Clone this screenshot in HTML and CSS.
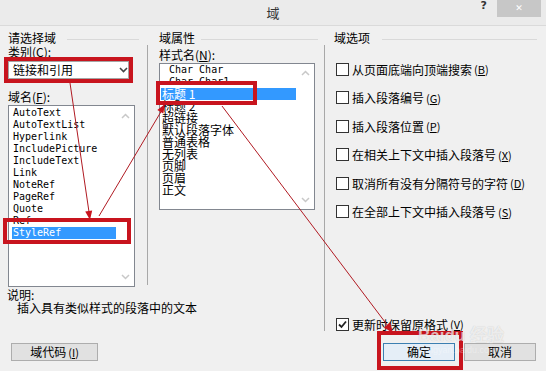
FILE: index.html
```html
<!DOCTYPE html>
<html lang="zh-CN">
<head>
    <meta charset="UTF-8">
    <meta name="viewport" content="width=device-width, initial-scale=1.0">
    <title>域</title>
    <link rel="stylesheet" href="styles.css">
</head>
<body>
  <div class="dialog">
    <div class="titlebar">
      <span></span>
      <span class="title">域</span>
      <div class="title-buttons">
        <span class="help">?</span>
        <span class="close">&#x2715;</span>
      </div>
    </div>

    <div class="panel">
      <div class="col col-left">
        <div class="group-head"><span>请选择域</span><i class="rule"></i></div>
        <div class="label">类别(<u>C</u>):</div>
        <div class="combo">
          <span>链接和引用</span>
          <svg class="chev" width="9" height="6" viewBox="0 0 9 6"><path d="M1 1 L4.5 4.5 L8 1" fill="none" stroke="#444" stroke-width="1.6"/></svg>
        </div>
        <div class="label label-fields">域名(<u>F</u>):</div>
        <div class="listbox list-fields">
          <ul class="items mono">
            <li>AutoText</li>
            <li>AutoTextList</li>
            <li>Hyperlink</li>
            <li>IncludePicture</li>
            <li>IncludeText</li>
            <li>Link</li>
            <li>NoteRef</li>
            <li>PageRef</li>
            <li>Quote</li>
            <li>Ref</li>
            <li class="selected">StyleRef</li>
          </ul>
          <div class="scroll">
            <svg width="9" height="6" viewBox="0 0 9 6"><path d="M1 5 L4.5 1.5 L8 5" fill="none" stroke="#c8c8c8" stroke-width="1.5"/></svg>
            <svg width="9" height="6" viewBox="0 0 9 6"><path d="M1 1 L4.5 4.5 L8 1" fill="none" stroke="#c8c8c8" stroke-width="1.5"/></svg>
          </div>
        </div>
      </div>

      <div class="vsep vsep-left"></div>

      <div class="col col-mid">
        <div class="group-head"><span>域属性</span><i class="rule"></i></div>
        <div class="label label-styles">样式名(<u>N</u>):</div>
        <div class="listbox list-styles">
          <ul class="items items-cjk">
            <li class="mono indent">Char Char</li>
            <li class="mono indent">Char Char1</li>
            <li class="selected">标题 1</li>
            <li>标题 2</li>
            <li>超链接</li>
            <li>默认段落字体</li>
            <li>普通表格</li>
            <li>无列表</li>
            <li>页脚</li>
            <li>页眉</li>
            <li>正文</li>
          </ul>
          <div class="scroll">
            <svg width="9" height="6" viewBox="0 0 9 6"><path d="M1 5 L4.5 1.5 L8 5" fill="none" stroke="#c8c8c8" stroke-width="1.5"/></svg>
            <svg width="9" height="6" viewBox="0 0 9 6"><path d="M1 1 L4.5 4.5 L8 1" fill="none" stroke="#c8c8c8" stroke-width="1.5"/></svg>
          </div>
        </div>
      </div>

      <div class="vsep vsep-right"></div>

      <div class="col col-right">
        <div class="group-head"><span>域选项</span><i class="rule"></i></div>
        <div class="options">
          <label class="opt"><span class="box"></span>从页面底端向顶端搜索<span class="key">(<u>B</u>)</span></label>
          <label class="opt"><span class="box"></span>插入段落编号<span class="key">(<u>G</u>)</span></label>
          <label class="opt"><span class="box"></span>插入段落位置<span class="key">(<u>P</u>)</span></label>
          <label class="opt"><span class="box"></span>在相关上下文中插入段落号<span class="key">(<u>X</u>)</span></label>
          <label class="opt"><span class="box"></span>取消所有没有分隔符号的字符<span class="key">(<u>D</u>)</span></label>
          <label class="opt"><span class="box"></span>在全部上下文中插入段落号<span class="key">(<u>S</u>)</span></label>
        </div>
        <label class="opt opt-keep">
          <span class="box">
            <svg width="11" height="11" viewBox="0 0 11 11"><path d="M2 5.5 L4.5 8 L9 2.5" fill="none" stroke="#222" stroke-width="1.8"/></svg>
          </span>更新时保留原格式<span class="key">(<u>V</u>)</span>
        </label>
      </div>

      <div class="desc">
        <div class="desc-title">说明:</div>
        <div class="desc-text">插入具有类似样式的段落中的文本</div>
      </div>

      <div class="buttons">
        <button class="btn btn-code">域代码<span class="key">(<u>I</u>)</span></button>
        <button class="btn btn-ok">确定</button>
        <button class="btn btn-cancel">取消</button>
      </div>
    </div>

    <!-- red annotation marks drawn over the dialog -->
    <svg class="annot" width="546" height="371" viewBox="0 0 546 371">
      <g fill="none" stroke="#c8141e" stroke-width="4">
        <rect x="6" y="59" width="125" height="22"/>
        <rect x="5" y="220" width="124" height="22"/>
        <rect x="158" y="83" width="97" height="20"/>
        <rect x="379" y="333" width="82" height="35"/>
      </g>
      <g stroke="#b01a22" stroke-width="1" fill="none">
        <line x1="70" y1="83" x2="89" y2="212"/>
        <line x1="99" y1="216" x2="162" y2="110"/>
        <line x1="222" y1="106" x2="388" y2="326"/>
      </g>
      <g fill="#c8141e">
        <polygon points="90,220 92.2,210.6 85.2,211.6"/>
        <polygon points="165,104 163.3,113.5 157.3,109.9"/>
        <polygon points="393,333 390.2,322.6 383.8,327.4"/>
      </g>
    </svg>

    <div class="watermark">
      <div class="wm-logo">Bai<span class="wm-paw">du</span> 经验</div>
      <div class="wm-url">jingyan.baidu.com</div>
    </div>
  </div>
</body>
</html>
```

FILE: styles.css
```css
body {
    margin: 0;
    background-color: #f0f0f0;
    font-family: "Noto Sans CJK SC", sans-serif;
    font-size: 12px;
    color: #000000;
}

.dialog {
    position: relative;
    width: 546px;
    height: 371px;
    background-color: #f0f0f0;
    overflow: hidden;
}

.titlebar {
    height: 25px;
    background-color: #ebebeb;
    border-bottom: 1px solid #dadada;
    display: grid;
    grid-template-columns: 1fr auto 1fr;
    align-items: center;
}

.title {
    font-size: 13px;
    color: #333333;
}

.title-buttons {
    align-self: start;
    display: flex;
    justify-content: flex-end;
}

.help {
    font-family: "DejaVu Sans", sans-serif;
    font-weight: bold;
    font-size: 11px;
    line-height: 11px;
    color: #333333;
    margin-right: 10px;
}

.close {
    width: 44px;
    height: 17px;
    margin-right: 5px;
    background-color: #c7c7c7;
    color: #ffffff;
    font-family: "DejaVu Sans", sans-serif;
    font-size: 9px;
    line-height: 17px;
    text-align: center;
}

.panel {
    display: grid;
    grid-template-columns: 147px 1px 176px 1px 1fr;
    grid-template-rows: 262px 52px auto;
}

.col {
    padding-top: 5px;
    min-width: 0;
}

.col-left {
    grid-column: 1;
    grid-row: 1;
    padding-left: 8px;
}

.col-mid {
    grid-column: 3;
    grid-row: 1;
    padding-left: 11px;
}

.col-right {
    grid-column: 5;
    grid-row: 1 / 3;
    padding-left: 9px;
}

.vsep {
    background-color: #a8a8a8;
    margin-top: 19px;
}

.vsep-left {
    grid-column: 2;
    grid-row: 1;
    height: 240px;
}

.vsep-right {
    grid-column: 4;
    grid-row: 1 / 3;
    height: 286px;
}

.group-head {
    display: flex;
    align-items: center;
    height: 14px;
    line-height: 14px;
    white-space: nowrap;
}

.group-head .rule {
    flex: 1;
    height: 1px;
    margin-top: 2px;
    margin-left: 11px;
    margin-right: 8px;
    background-color: #d9d9d9;
}

.col-mid .group-head .rule {
    margin-left: 6px;
    margin-right: 6px;
}

.col-right .group-head .rule {
    margin-left: 12px;
    margin-right: 9px;
}

.label {
    height: 14px;
    line-height: 14px;
    white-space: nowrap;
}

u {
    text-decoration: underline;
    text-underline-offset: 1px;
}

.combo {
    box-sizing: border-box;
    width: 121px;
    height: 18px;
    margin-top: 2px;
    padding-left: 4px;
    padding-right: 0;
    background-color: #ffffff;
    border: 1px solid #a5a5a5;
    display: flex;
    align-items: center;
    justify-content: space-between;
    line-height: 16px;
}

.label-fields {
    margin-top: 11px;
}

.label-styles {
    margin-top: 3px;
}

.listbox {
    box-sizing: border-box;
    background-color: #ffffff;
    border: 1px solid #828790;
    display: flex;
    justify-content: space-between;
    margin-top: 1px;
}

.list-fields {
    width: 127px;
    height: 182px;
    padding: 1px 0 0 3px;
}

.list-styles {
    width: 156px;
    height: 147px;
    padding: 0 0 0 1px;
}

.items {
    list-style-type: none;
    margin: 0;
    padding: 0;
}

.list-fields .items {
    width: 104px;
}

.list-styles .items {
    width: 135px;
}

.items li {
    height: 12px;
    line-height: 12px;
    padding-left: 1px;
    white-space: nowrap;
}

.mono {
    font-family: "DejaVu Sans Mono", monospace;
    font-size: 10px;
}

.items-cjk li {
    font-size: 12px;
}

.items-cjk li.mono {
    font-size: 10px;
}

.items li.indent {
    padding-left: 8px;
}

.items li.selected {
    background-color: #3399ff;
    color: #ffffff;
}

.scroll {
    width: 17px;
    display: flex;
    flex-direction: column;
    justify-content: space-between;
    align-items: center;
    padding: 6px 0 6px;
}

.options {
    margin-top: 10px;
}

.opt {
    display: flex;
    align-items: center;
    height: 28.5px;
    padding-left: 2px;
    white-space: nowrap;
}

.box {
    box-sizing: border-box;
    width: 13px;
    height: 13px;
    margin-right: 3px;
    border: 1px solid #333333;
    background-color: #ffffff;
    display: flex;
    align-items: center;
    justify-content: center;
}

.key {
    font-size: 11px;
    margin-left: 2px;
}

.opt-keep {
    margin-top: 84px;
}

.desc {
    grid-column: 1 / 4;
    grid-row: 2;
    white-space: nowrap;
}

.desc-title {
    line-height: 13px;
    padding-left: 7px;
}

.desc-text {
    line-height: 13px;
    padding-left: 17px;
}

.buttons {
    grid-column: 1 / -1;
    grid-row: 3;
    display: flex;
    margin-top: 3px;
    padding: 0 10px 0 11px;
    gap: 9px;
}

.btn {
    box-sizing: border-box;
    height: 18px;
    padding: 0;
    font-family: "Noto Sans CJK SC", sans-serif;
    font-size: 12px;
    line-height: 16px;
    color: #000000;
    background-color: #e1e1e1;
    border: 1px solid #adadad;
}

.btn-code {
    width: 87px;
}

.btn-ok {
    width: 72px;
    margin-left: auto;
    border-color: #3c7fb1;
    background-color: #e5eef7;
}

.btn-cancel {
    width: 72px;
}

.annot {
    position: absolute;
    top: 0;
    left: 0;
    pointer-events: none;
}

.watermark {
    position: absolute;
    left: 418px;
    top: 326px;
    color: rgba(255, 255, 255, 0.7);
    text-shadow: 0 0 1px rgba(0, 0, 0, 0.2);
    pointer-events: none;
}

.wm-logo {
    font-family: "Liberation Sans", sans-serif;
    font-weight: bold;
    font-size: 17px;
    line-height: 19px;
}

.wm-url {
    font-family: "Liberation Sans", sans-serif;
    font-size: 9px;
    line-height: 10px;
    padding-left: 6px;
    color: rgba(255, 255, 255, 0.35);
    text-shadow: none;
}
```
